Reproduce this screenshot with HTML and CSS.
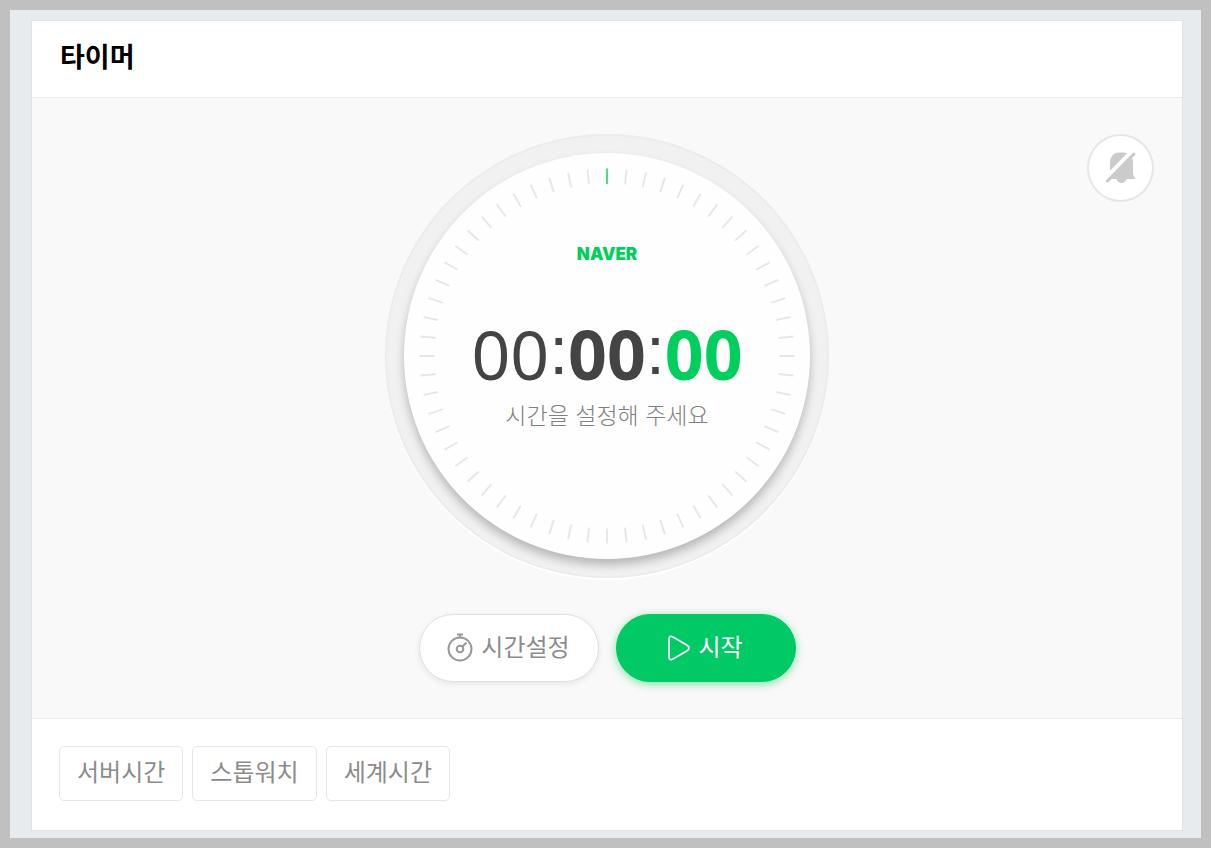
FILE: index.html
```
<!DOCTYPE html>
<html lang="ko">
<head>
    <meta charset="UTF-8">
    <meta name="viewport" content="width=device-width, initial-scale=1.0">
    <title>타이머</title>
    <link rel="stylesheet" href="styles.css">
</head>
<body>
    <div class="page">
        <main class="card">
            <header class="card-header">
                <h2>타이머</h2>
            </header>

            <section class="stage">
                <button class="sound-btn" type="button" aria-label="알림음 끄기">
                    <svg width="32" height="34" viewBox="0 0 32 34">
                        <path d="M3 28 Q5 24 5 20 V11 Q6 1.500 14 1.500 H19 Q27 2 28 10 V21 Q28 25 30 27 V28 H21.500 Q20 32 16.500 32 Q13 32 11.500 28 Z" fill="#cbcbcb"/>
                        <path d="M-1 29 L28 -1" stroke="#fff" stroke-width="4"/>
                        <path d="M22 2 L30 2 L30 7 L27 7 Z" fill="#fff"/>
                        <path d="M2.500 30 L29 3" stroke="#cbcbcb" stroke-width="3" stroke-linecap="round"/>
                    </svg>
                </button>

                <!-- Dial -->
                <div class="dial">
                    <div class="dial-face">
                        <svg class="ticks" viewBox="0 0 406 406">
                            <circle class="tick-ring" cx="203" cy="203" r="180" pathLength="600"/>
                            <path class="tick-now" d="M203 15.500 V31"/>
                        </svg>
                        <span class="logo">NAVER</span>
                        <div class="time">
                            <span class="hour">00</span><span class="colon">:</span><span class="minute">00</span><span class="colon">:</span><span class="second">00</span>
                        </div>
                        <p class="message">시간을 설정해 주세요</p>
                    </div>
                </div>

                <!-- Controls -->
                <div class="controls">
                    <button class="btn" type="button">
                        <svg width="26" height="30" viewBox="0 0 26 30" fill="none" stroke="#999" stroke-width="2">
                            <circle cx="13" cy="16" r="11.500"/>
                            <circle cx="13" cy="16" r="3.300"/>
                            <path d="M15.500 13.500 L19.500 9.500 M13 1 V4 M10 1.500 H16"/>
                        </svg>
                        시간설정
                    </button>
                    <button class="btn btn-start" type="button">
                        <svg width="22" height="26" viewBox="0 0 22 26" fill="none" stroke="#fff" stroke-width="1.700">
                            <path d="M1 4 Q1 0 5 2 L19.500 10.500 Q22.500 13 19.500 15.500 L5 24 Q1 26 1 22 Z"/>
                        </svg>
                        시작
                    </button>
                </div>
            </section>

            <nav class="links">
                <a href="#">서버시간</a>
                <a href="#">스톱워치</a>
                <a href="#">세계시간</a>
            </nav>
        </main>
    </div>
</body>
</html>
```
FILE: styles.css
```
* {
    box-sizing: border-box;
}
body {
    margin: 0;
    padding: 10px;
    background-color: #c0c0c0;
    font-family: "Noto Sans CJK KR", sans-serif;
}
.page {
    padding: 10px 18px 7px 21px;
    background-color: #e7ebee;
}
.card {
    border: 1px solid #e0e3e6;
    background-color: #fff;
}
.card-header {
    padding: 15px 28px 21px;
    border-bottom: 1px solid #ebebeb;
}
h2 {
    margin: 0;
    font-size: 27px;
    line-height: 40px;
    font-weight: 700;
    color: #000;
}
.stage {
    position: relative;
    display: flex;
    flex-direction: column;
    align-items: center;
    gap: 36px;
    padding: 36px 28px;
    background-color: #f9f9f9;
}
.sound-btn {
    position: absolute;
    top: 36px;
    right: 28px;
    width: 67px;
    height: 68px;
    padding: 0;
    display: flex;
    align-items: center;
    justify-content: center;
    border: 2px solid #e6e6e6;
    border-radius: 50%;
    background-color: #fff;
    cursor: pointer;
}
.dial {
    width: 444px;
    padding: 19px;
    border-radius: 50%;
    background-color: #f1f1f1;
    box-shadow: inset 0 0 0 2px #ececec, 0 2px 1px #fff;
}
.dial-face {
    position: relative;
    display: flex;
    flex-direction: column;
    align-items: center;
    height: 406px;
    padding-top: 90px;
    border-radius: 50%;
    background-color: #fefefe;
    box-shadow: 0 6px 10px rgba(0, 0, 0, 0.24);
}
.ticks {
    position: absolute;
    inset: 0;
}
.tick-ring {
    fill: none;
    stroke: #e6e6e6;
    stroke-width: 15;
    stroke-dasharray: 1 9;
    stroke-dashoffset: 0.5;
}
.tick-now {
    stroke: #4dda8d;
    stroke-width: 2;
}
.logo {
    font-family: Inter, sans-serif;
    font-size: 17px;
    line-height: 22px;
    font-weight: 900;
    color: #03cf5d;
}
.time {
    margin-top: 49px;
    font-family: "Noto Sans", sans-serif;
    font-size: 68px;
    line-height: 80px;
    white-space: nowrap;
    color: #444;
}
.minute, .second {
    font-weight: 700;
}
.second {
    color: #00cf5d;
}
.colon {
    font-family: "Liberation Sans", sans-serif;
    line-height: 1;
    vertical-align: 6px;
}
.message {
    margin: 4px 0 0;
    font-size: 23px;
    line-height: 32px;
    font-weight: 300;
    color: #808080;
}
.controls {
    display: flex;
    gap: 17px;
}
.btn {
    display: flex;
    align-items: center;
    justify-content: center;
    gap: 8px;
    width: 180px;
    height: 68px;
    padding: 0 0 5px;
    border: 1px solid #e0e0e0;
    border-radius: 34px;
    background-color: #fff;
    box-shadow: 0 2px 6px rgba(0, 0, 0, 0.08);
    font-family: inherit;
    font-size: 24px;
    font-weight: 400;
    color: #8c8c8c;
    cursor: pointer;
}
.btn svg {
    margin-top: 4px;
}
.btn-start {
    border-color: #00c966;
    background-color: #00c966;
    box-shadow: 0 2px 8px rgba(0, 201, 80, 0.5);
    color: #fff;
}
.links {
    display: flex;
    gap: 9px;
    padding: 27px 27px 29px;
    border-top: 1px solid #ebebeb;
}
.links a {
    padding: 6px 17px 11px;
    border: 1px solid #e6e6e6;
    border-radius: 5px;
    font-size: 24px;
    line-height: 36px;
    font-weight: 400;
    color: #8c8c8c;
    text-decoration: none;
}
```
